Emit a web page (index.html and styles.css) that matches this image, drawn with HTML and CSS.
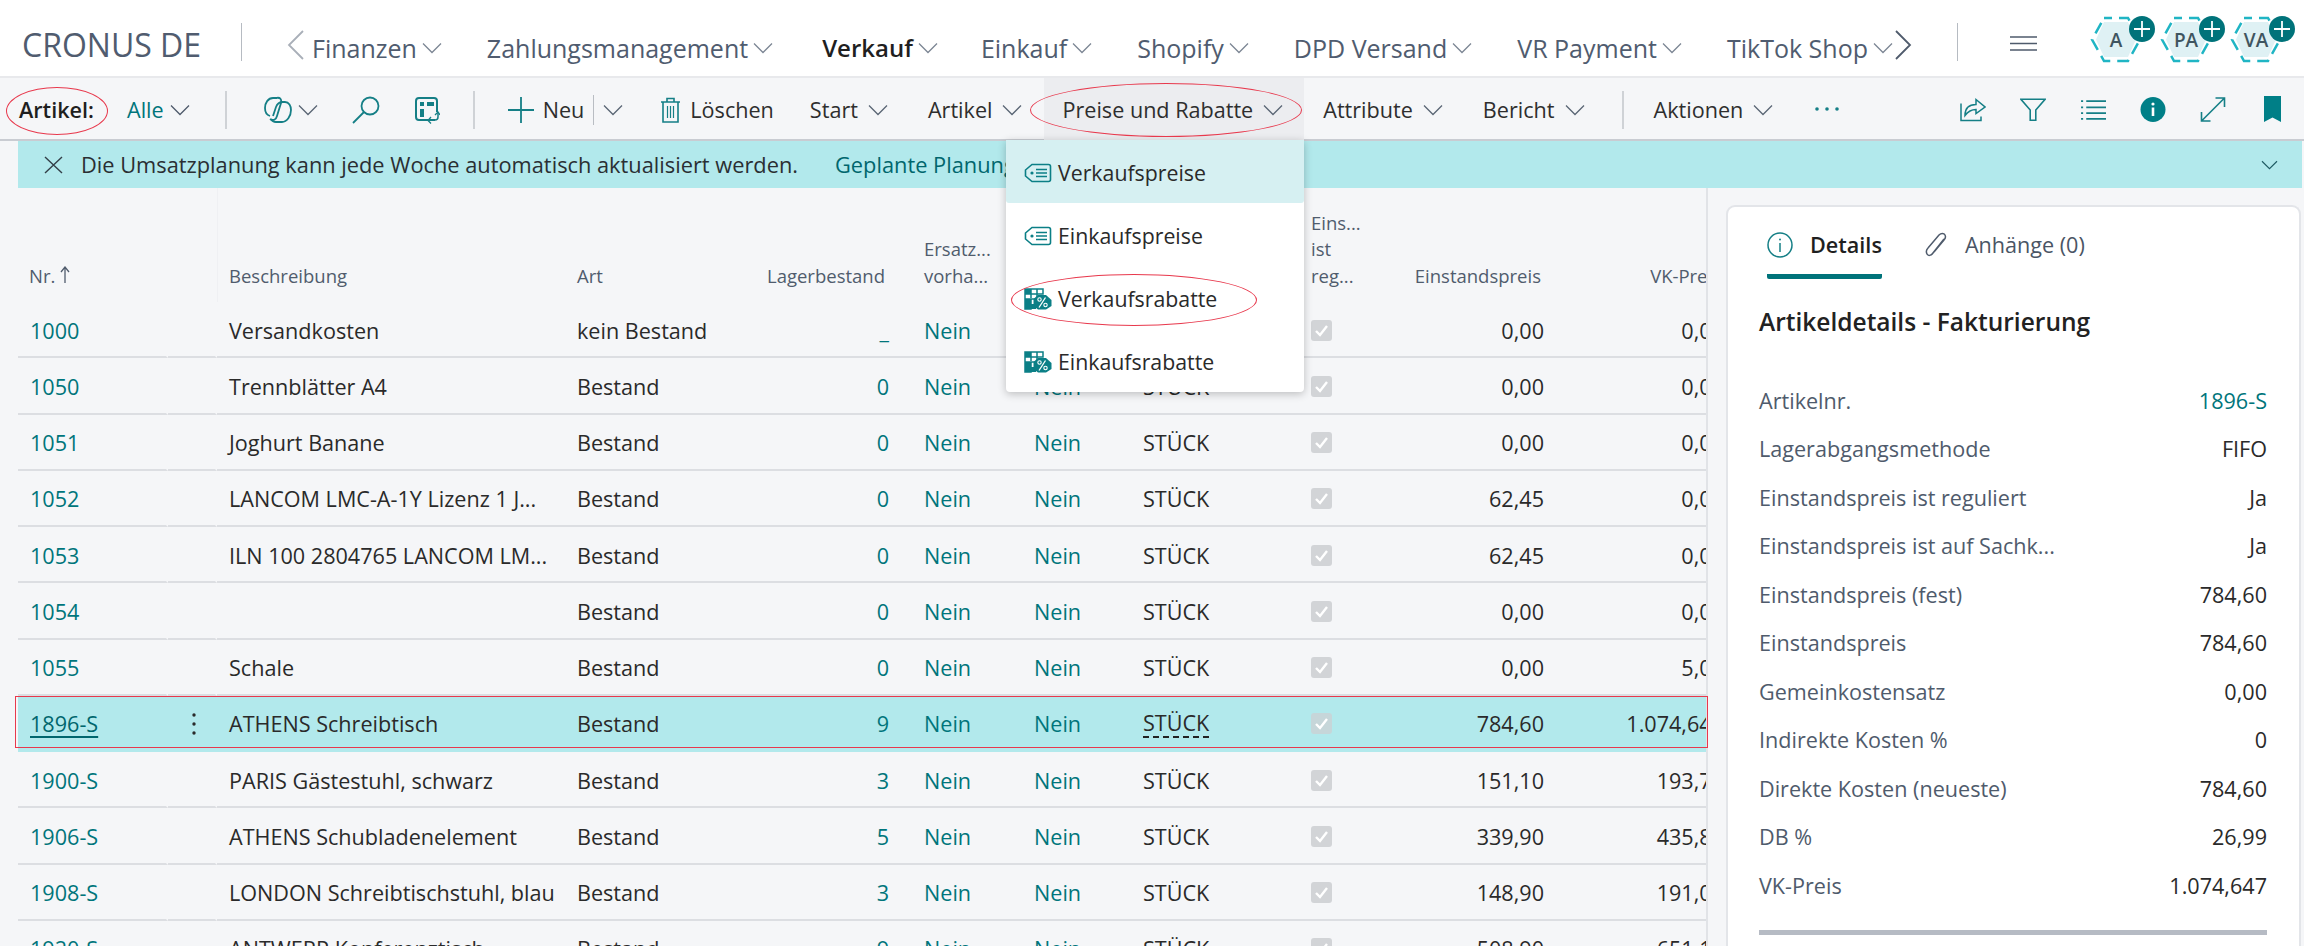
FILE: index.html
```html
<!DOCTYPE html>
<html lang="de">
<head>
<meta charset="utf-8">
<title>Artikel</title>
<link rel="stylesheet" href="styles.css">
</head>
<body>
<svg class="sprite" aria-hidden="true">
  <symbol id="chev" viewBox="0 0 20 12"><path d="M1 1.5 10 10.5 19 1.5" fill="none" stroke="currentColor" stroke-width="1.3"/></symbol>
  <symbol id="tag" viewBox="0 0 28 22"><path d="M8 2.500H24.500a2 2 0 0 1 2 2V17.500a2 2 0 0 1-2 2H8L1.500 14V8Z" fill="none" stroke="currentColor" stroke-width="1.600"/><circle cx="8" cy="11" r="1.600" fill="currentColor"/><path d="M12 7.500H23M12 11H23M12 14.500H23" stroke="currentColor" stroke-width="1.400"/></symbol>
  <symbol id="disc" viewBox="0 0 28 22"><path d="M1 1H19V6H13V11H7V21H1ZM7 6V10M1 6H13M13 1V6M7 1V6M1 11H7M1 16H7" fill="none" stroke="currentColor" stroke-width="1.500"/><path d="M1 1H7V6H1ZM1 11H7V16H1ZM7 16H12V21H1V16Z" fill="currentColor"/><path d="M14 7H22L27.500 12V18L22 21.500H14L9.500 18V11Z" fill="currentColor"/><path d="M21.500 9.500 15 19.500" stroke="#fff" stroke-width="1.300"/><circle cx="15.500" cy="11.500" r="1.700" fill="none" stroke="#fff" stroke-width="1.100"/><circle cx="21.500" cy="17" r="1.700" fill="none" stroke="#fff" stroke-width="1.100"/></symbol>
  <symbol id="hex" viewBox="0 0 52 47"><path d="M14 6H38L46 23.500 38 41H14L6 23.500Z" fill="#dff1f4"/><path d="M14 2H38L50 23.500 38 45H14L2 23.500Z" fill="none" stroke="#20b5c4" stroke-width="2.500" stroke-dasharray="12 7" stroke-dashoffset="4"/></symbol>
  <symbol id="check" viewBox="0 0 21 21"><path d="M5 11 9 15 16 6" fill="none" stroke="#fff" stroke-width="2.400"/></symbol>
</svg>

<div class="page">
  <header class="nav">
    <div class="brand">CRONUS DE</div>
    <span class="nav-sep"></span>
    <svg class="nav-arrow nav-arrow-left" viewBox="0 0 17 30"><path d="M16 1 2 15 16 29" fill="none" stroke="#a9afb8" stroke-width="1.800"/></svg>
    <nav class="nav-items">
      <a class="nav-item">Finanzen<svg class="chev nav-chev"><use href="#chev"/></svg></a>
      <a class="nav-item">Zahlungsmanagement<svg class="chev nav-chev"><use href="#chev"/></svg></a>
      <a class="nav-item nav-item-active">Verkauf<svg class="chev nav-chev"><use href="#chev"/></svg></a>
      <a class="nav-item">Einkauf<svg class="chev nav-chev"><use href="#chev"/></svg></a>
      <a class="nav-item">Shopify<svg class="chev nav-chev"><use href="#chev"/></svg></a>
      <a class="nav-item">DPD Versand<svg class="chev nav-chev"><use href="#chev"/></svg></a>
      <a class="nav-item">VR Payment<svg class="chev nav-chev"><use href="#chev"/></svg></a>
      <a class="nav-item">TikTok Shop<svg class="chev nav-chev"><use href="#chev"/></svg></a>
    </nav>
    <svg class="nav-arrow nav-arrow-right" viewBox="0 0 17 30"><path d="M1 1 15 15 1 29" fill="none" stroke="#4f5b6c" stroke-width="1.800"/></svg>
    <span class="nav-sep nav-sep-right"></span>
    <svg class="burger" viewBox="0 0 27 15"><path d="M0 1H27M0 7.500H27M0 14H27" stroke="#4f5b6c" stroke-width="1.600"/></svg>
    <div class="badges">
      <div class="badge"><svg class="hex"><use href="#hex"/></svg><span class="badge-text">A</span><svg class="badge-plus" viewBox="0 0 26 26"><circle cx="13" cy="13" r="13" fill="#00737a"/><path d="M13 5V21M5 13H21" stroke="#fff" stroke-width="1.800"/></svg></div>
      <div class="badge"><svg class="hex"><use href="#hex"/></svg><span class="badge-text">PA</span><svg class="badge-plus" viewBox="0 0 26 26"><circle cx="13" cy="13" r="13" fill="#00737a"/><path d="M13 5V21M5 13H21" stroke="#fff" stroke-width="1.800"/></svg></div>
      <div class="badge"><svg class="hex"><use href="#hex"/></svg><span class="badge-text">VA</span><svg class="badge-plus" viewBox="0 0 26 26"><circle cx="13" cy="13" r="13" fill="#00737a"/><path d="M13 5V21M5 13H21" stroke="#fff" stroke-width="1.800"/></svg></div>
    </div>
  </header>

  <div class="toolbar">
    <strong class="page-title">Artikel:</strong>
    <a class="tool tool-filter">Alle<svg class="chev"><use href="#chev"/></svg></a>
    <span class="tb-sep tb-sep-a"></span>
    <svg class="ico ico-copilot" viewBox="0 0 28 28" fill="none" stroke="#157f86" stroke-width="1.800"><path d="M13 2H9C4 2 1 7 1 12 1 16 3 19 6 20"/><path d="M12 2C16 1 18 3 17 7L13 20C12 24 9 25 6 23"/><path d="M17 6H21C25 6 27 10 27 14 27 20 23 26 18 26H12C9 26 8 25 7 23"/><path d="M19 6C15 6 13 8 12 11L9 20"/></svg>
    <svg class="chev chev-copilot"><use href="#chev"/></svg>
    <svg class="ico ico-search" viewBox="0 0 28 28" fill="none" stroke="#157f86" stroke-width="1.800"><circle cx="18" cy="10" r="8.500"/><path d="M12 16 1 27"/></svg>
    <svg class="ico ico-layout" viewBox="0 0 26 28" fill="none" stroke="#157f86" stroke-width="2"><path d="M21 24H5a3 3 0 0 1-3-3V5a3 3 0 0 1 3-3H20a3 3 0 0 1 3 3V16"/><path d="M6 6H10V10H6ZM13 6H20V10H13ZM6 13H10V21H6Z" fill="#157f86" stroke="none"/><path d="M24 17V21a3 3 0 0 1-3 3H15" stroke-width="1.500"/><path d="M17 21 14 24.500 17 27.500M21 19 24 16 26 19" stroke-width="1.300"/></svg>
    <span class="tb-sep tb-sep-b"></span>
    <svg class="ico ico-plus" viewBox="0 0 26 26"><path d="M13 0V26M0 13H26" stroke="#157f86" stroke-width="1.800"/></svg>
    <a class="tool tool-new">Neu</a>
    <span class="tb-sep-thin"></span>
    <svg class="chev chev-new"><use href="#chev"/></svg>
    <svg class="ico ico-trash" viewBox="0 0 21 26" fill="none" stroke="#157f86" stroke-width="1.600"><path d="M1 5H20M7 5V1.500H14V5M3 5V25H18V5"/><path d="M7.500 9V21M10.500 9V21M13.500 9V21" stroke-width="1.200"/></svg>
    <a class="tool tool-delete">Löschen</a>
    <a class="tool tool-menu tool-start">Start<svg class="chev"><use href="#chev"/></svg></a>
    <a class="tool tool-menu">Artikel<svg class="chev"><use href="#chev"/></svg></a>
    <a class="tool tool-menu tool-open">Preise und Rabatte<svg class="chev"><use href="#chev"/></svg></a>
    <a class="tool tool-menu">Attribute<svg class="chev"><use href="#chev"/></svg></a>
    <a class="tool tool-menu">Bericht<svg class="chev"><use href="#chev"/></svg></a>
    <span class="tb-sep tb-sep-c"></span>
    <a class="tool tool-actions">Aktionen<svg class="chev"><use href="#chev"/></svg></a>
    <svg class="ico ico-more" viewBox="0 0 26 6"><circle cx="3" cy="3" r="1.800" fill="#157f86"/><circle cx="13" cy="3" r="1.800" fill="#157f86"/><circle cx="23" cy="3" r="1.800" fill="#157f86"/></svg>
    <div class="tb-right">
      <svg class="ico-r" viewBox="0 0 26 24" fill="none" stroke="#157f86" stroke-width="1.500"><path d="M1 6V23H21V19"/><path d="M5 18C5 11 9 7 16 7V2L25 9.500 16 16V12C11 12 8 14 5 18Z"/></svg>
      <svg class="ico-r" viewBox="0 0 28 25" fill="none" stroke="#157f86" stroke-width="1.700"><path d="M1 1.500H27L17 13V24H11V13Z"/></svg>
      <svg class="ico-r" viewBox="0 0 25 24"><path d="M1 4H3M6 4H25M1 10H3M6 10H25M1 15.500H3M6 15.500H25M1 21H3M6 21H25" stroke="#157f86" stroke-width="1.700"/></svg>
      <svg class="ico-r" viewBox="0 0 25 25"><circle cx="12.500" cy="12.500" r="12.500" fill="#007f87"/><circle cx="12.500" cy="7" r="1.600" fill="#fff"/><path d="M12.500 10.500V19" stroke="#fff" stroke-width="2.600"/></svg>
      <svg class="ico-r" viewBox="0 0 25 25" fill="none" stroke="#157f86" stroke-width="1.600"><path d="M1 24 24 1M15 1H24V10M1 15V24H10"/></svg>
      <svg class="ico-r ico-mark" viewBox="0 0 17 26"><path d="M0 0H17V26L8.500 21.500 0 26Z" fill="#007f87"/></svg>
    </div>
  </div>

  <div class="msg">
    <svg class="msg-close" viewBox="0 0 19 18"><path d="M1 1 18 17M18 1 1 17" stroke="#333f48" stroke-width="1.400"/></svg>
    <span class="msg-text">Die Umsatzplanung kann jede Woche automatisch aktualisiert werden.</span>
    <a class="msg-link">Geplante Planungsaktualisierungen anzeigen</a>
    <svg class="chev msg-chev"><use href="#chev"/></svg>
  </div>

  <main class="content">
    <section class="table">
      <div class="grid thead">
        <div class="th">Nr. <svg class="sort" viewBox="0 0 10 17"><path d="M5 17V2M1 6 5 1 9 6" fill="none" stroke="#505c6d" stroke-width="1.300"/></svg></div>
        <div class="th"></div>
        <div class="th">Beschreibung</div>
        <div class="th">Art</div>
        <div class="th th-r th-lager">Lagerbestand</div>
        <div class="th">Ersatz...<br>vorha...</div>
        <div class="th">Stückl...<br>vorha...</div>
        <div class="th">Basis...</div>
        <div class="th">Eins...<br>ist<br>reg...</div>
        <div class="th th-r">Einstandspreis</div>
        <div class="th th-r">VK-Preis</div>
      </div>

      <div class="grid row"><div class="td"><a class="link">1000</a></div><div class="td"></div><div class="td">Versandkosten</div><div class="td">kein Bestand</div><div class="td td-r td-lager"><a class="link">_</a></div><div class="td"><a class="link">Nein</a></div><div class="td"><a class="link">Nein</a></div><div class="td">STÜCK</div><div class="td"><svg class="cb"><use href="#check"/></svg></div><div class="td td-r">0,00</div><div class="td td-r">0,00</div></div>
      <div class="grid row"><div class="td"><a class="link">1050</a></div><div class="td"></div><div class="td">Trennblätter A4</div><div class="td">Bestand</div><div class="td td-r td-lager"><a class="link">0</a></div><div class="td"><a class="link">Nein</a></div><div class="td"><a class="link">Nein</a></div><div class="td">STÜCK</div><div class="td"><svg class="cb"><use href="#check"/></svg></div><div class="td td-r">0,00</div><div class="td td-r">0,00</div></div>
      <div class="grid row"><div class="td"><a class="link">1051</a></div><div class="td"></div><div class="td">Joghurt Banane</div><div class="td">Bestand</div><div class="td td-r td-lager"><a class="link">0</a></div><div class="td"><a class="link">Nein</a></div><div class="td"><a class="link">Nein</a></div><div class="td">STÜCK</div><div class="td"><svg class="cb"><use href="#check"/></svg></div><div class="td td-r">0,00</div><div class="td td-r">0,00</div></div>
      <div class="grid row"><div class="td"><a class="link">1052</a></div><div class="td"></div><div class="td">LANCOM LMC-A-1Y Lizenz 1 J...</div><div class="td">Bestand</div><div class="td td-r td-lager"><a class="link">0</a></div><div class="td"><a class="link">Nein</a></div><div class="td"><a class="link">Nein</a></div><div class="td">STÜCK</div><div class="td"><svg class="cb"><use href="#check"/></svg></div><div class="td td-r">62,45</div><div class="td td-r">0,00</div></div>
      <div class="grid row"><div class="td"><a class="link">1053</a></div><div class="td"></div><div class="td">ILN 100 2804765 LANCOM LM...</div><div class="td">Bestand</div><div class="td td-r td-lager"><a class="link">0</a></div><div class="td"><a class="link">Nein</a></div><div class="td"><a class="link">Nein</a></div><div class="td">STÜCK</div><div class="td"><svg class="cb"><use href="#check"/></svg></div><div class="td td-r">62,45</div><div class="td td-r">0,00</div></div>
      <div class="grid row"><div class="td"><a class="link">1054</a></div><div class="td"></div><div class="td"></div><div class="td">Bestand</div><div class="td td-r td-lager"><a class="link">0</a></div><div class="td"><a class="link">Nein</a></div><div class="td"><a class="link">Nein</a></div><div class="td">STÜCK</div><div class="td"><svg class="cb"><use href="#check"/></svg></div><div class="td td-r">0,00</div><div class="td td-r">0,00</div></div>
      <div class="grid row"><div class="td"><a class="link">1055</a></div><div class="td"></div><div class="td">Schale</div><div class="td">Bestand</div><div class="td td-r td-lager"><a class="link">0</a></div><div class="td"><a class="link">Nein</a></div><div class="td"><a class="link">Nein</a></div><div class="td">STÜCK</div><div class="td"><svg class="cb"><use href="#check"/></svg></div><div class="td td-r">0,00</div><div class="td td-r">5,00</div></div>
      <div class="grid row row-selected"><div class="td"><a class="link link-current">1896-S</a></div><div class="td td-kebab"><svg class="kebab" viewBox="0 0 4 24"><circle cx="2" cy="3" r="1.700"/><circle cx="2" cy="12" r="1.700"/><circle cx="2" cy="21" r="1.700"/></svg></div><div class="td">ATHENS Schreibtisch</div><div class="td">Bestand</div><div class="td td-r td-lager"><a class="link">9</a></div><div class="td"><a class="link">Nein</a></div><div class="td"><a class="link">Nein</a></div><div class="td"><span class="dashed">STÜCK</span></div><div class="td"><svg class="cb"><use href="#check"/></svg></div><div class="td td-r">784,60</div><div class="td td-r">1.074,647</div></div>
      <div class="grid row"><div class="td"><a class="link">1900-S</a></div><div class="td"></div><div class="td">PARIS Gästestuhl, schwarz</div><div class="td">Bestand</div><div class="td td-r td-lager"><a class="link">3</a></div><div class="td"><a class="link">Nein</a></div><div class="td"><a class="link">Nein</a></div><div class="td">STÜCK</div><div class="td"><svg class="cb"><use href="#check"/></svg></div><div class="td td-r">151,10</div><div class="td td-r">193,70</div></div>
      <div class="grid row"><div class="td"><a class="link">1906-S</a></div><div class="td"></div><div class="td">ATHENS Schubladenelement</div><div class="td">Bestand</div><div class="td td-r td-lager"><a class="link">5</a></div><div class="td"><a class="link">Nein</a></div><div class="td"><a class="link">Nein</a></div><div class="td">STÜCK</div><div class="td"><svg class="cb"><use href="#check"/></svg></div><div class="td td-r">339,90</div><div class="td td-r">435,80</div></div>
      <div class="grid row"><div class="td"><a class="link">1908-S</a></div><div class="td"></div><div class="td">LONDON Schreibtischstuhl, blau</div><div class="td">Bestand</div><div class="td td-r td-lager"><a class="link">3</a></div><div class="td"><a class="link">Nein</a></div><div class="td"><a class="link">Nein</a></div><div class="td">STÜCK</div><div class="td"><svg class="cb"><use href="#check"/></svg></div><div class="td td-r">148,90</div><div class="td td-r">191,00</div></div>
      <div class="grid row"><div class="td"><a class="link">1920-S</a></div><div class="td"></div><div class="td">ANTWERP Konferenztisch</div><div class="td">Bestand</div><div class="td td-r td-lager"><a class="link">9</a></div><div class="td"><a class="link">Nein</a></div><div class="td"><a class="link">Nein</a></div><div class="td">STÜCK</div><div class="td"><svg class="cb"><use href="#check"/></svg></div><div class="td td-r">508,90</div><div class="td td-r">651,10</div></div>
    </section>

    <aside class="panel">
      <div class="tabs">
        <div class="tab tab-active">
          <svg class="tab-ico" viewBox="0 0 26 26" fill="none" stroke="#157f86" stroke-width="1.500"><circle cx="13" cy="13" r="12"/><path d="M13 11V20"/><circle cx="13" cy="7.500" r="1" fill="#157f86" stroke="none"/></svg>
          <span>Details</span>
        </div>
        <div class="tab">
          <svg class="tab-ico tab-clip" viewBox="0 0 22 26" fill="none" stroke="#4f5b6c" stroke-width="1.500"><path d="M19 7 8 21C6 24 3 24 2 22 1 20 1 18 3 16L14 3C16 1 19 1 20 3 21 5 21 6 19 8L9 20"/></svg>
          <span>Anhänge (0)</span>
        </div>
      </div>
      <h2 class="panel-title">Artikeldetails - Fakturierung</h2>
      <dl class="facts">
        <div class="fact"><dt>Artikelnr.</dt><dd class="fact-link">1896-S</dd></div>
        <div class="fact"><dt>Lagerabgangsmethode</dt><dd>FIFO</dd></div>
        <div class="fact"><dt>Einstandspreis ist reguliert</dt><dd>Ja</dd></div>
        <div class="fact"><dt>Einstandspreis ist auf Sachk...</dt><dd>Ja</dd></div>
        <div class="fact"><dt>Einstandspreis (fest)</dt><dd>784,60</dd></div>
        <div class="fact"><dt>Einstandspreis</dt><dd>784,60</dd></div>
        <div class="fact"><dt>Gemeinkostensatz</dt><dd>0,00</dd></div>
        <div class="fact"><dt>Indirekte Kosten %</dt><dd>0</dd></div>
        <div class="fact"><dt>Direkte Kosten (neueste)</dt><dd>784,60</dd></div>
        <div class="fact"><dt>DB %</dt><dd>26,99</dd></div>
        <div class="fact"><dt>VK-Preis</dt><dd>1.074,647</dd></div>
      </dl>
      <div class="panel-rule"></div>
    </aside>
  </main>

  <div class="menu">
    <a class="menu-item menu-item-hover"><svg class="menu-ico"><use href="#tag"/></svg>Verkaufspreise</a>
    <a class="menu-item"><svg class="menu-ico"><use href="#tag"/></svg>Einkaufspreise</a>
    <a class="menu-item"><svg class="menu-ico"><use href="#disc"/></svg>Verkaufsrabatte</a>
    <a class="menu-item"><svg class="menu-ico"><use href="#disc"/></svg>Einkaufsrabatte</a>
  </div>

  <span class="mark mark-title"></span>
  <span class="mark mark-prices"></span>
  <span class="mark mark-sales"></span>
  <span class="mark-row"></span>
</div>
</body>
</html>
```

FILE: styles.css
```css
* { box-sizing: border-box; }
html, body { margin: 0; height: 100%; }
body {
  background: #f5f6f8;
  color: #2a2a2a;
  font-family: "Open Sans", "Liberation Sans", sans-serif;
  font-size: 21.600px;
  overflow: hidden;
}
a { color: inherit; text-decoration: none; }
.sprite { position: absolute; width: 0; height: 0; }
.page { position: relative; width: 2304px; height: 946px; overflow: hidden; }
.chev { width: 20px; height: 12px; color: #5a6675; flex: none; }

/* top navigation */
.nav {
  display: flex;
  align-items: center;
  height: 78px;
  padding-left: 22px;
  background: #fff;
  border-bottom: 2px solid #e8e9ec;
  color: #505c6f;
}
.brand { font-size: 32px; width: 219px; margin-top: 12px; }
.nav-sep { width: 1px; height: 38px; background: #b6bbc2; margin-top: 8px; }
.nav-arrow { width: 17px; height: 30px; margin-top: 14px; flex: none; }
.nav-arrow-left { margin-left: 45px; }
.nav-arrow-right { margin-left: 2px; }
.nav-items { display: flex; margin-left: 8px; margin-top: 20px; gap: 45px; }
.nav-item { display: flex; align-items: center; gap: 5px; font-size: 25px; line-height: 32px; white-space: nowrap; }
.nav-item-active { color: #1f1f1f; font-size: 24px; font-weight: 600; margin-left: 4px; margin-right: -2px; }
.nav-chev { color: #7c8694; }
.nav-sep-right { margin-left: 45px; }
.burger { width: 27px; height: 15px; margin-left: 52px; margin-top: 11px; flex: none; }
.badges { display: flex; margin-left: 53px; gap: 18px; margin-top: 3px; }
.badge { position: relative; width: 52px; height: 47px; }
.hex { width: 52px; height: 47px; display: block; }
.badge-text {
  position: absolute; inset: 0;
  display: flex; align-items: center; justify-content: center;
  font-size: 19px; font-weight: 600; color: #3f5560;
}
.badge-plus { position: absolute; right: -13px; top: 0; width: 26px; height: 26px; }

/* action bar */
.toolbar {
  position: relative;
  display: flex;
  align-items: center;
  height: 63px;
  padding: 2px 0 0 19px;
  border-bottom: 2px solid #c9ccd2;
}
.page-title { font-weight: 600; color: #1f1f1f; width: 75px; }
.tool { display: flex; align-items: center; gap: 10px; white-space: nowrap; color: #2e2e2e; flex: none; }
.tool-filter { color: #00757b; margin-left: 33px; gap: 6px; }
.tool-filter .chev { color: #4f5b6c; }
.tb-sep { width: 2px; height: 38px; background: #cfd2d6; flex: none; }
.tb-sep-a { margin-left: 35px; }
.tb-sep-b { margin-left: 33px; }
.tb-sep-c { margin-left: 37px; }
.ico { flex: none; display: block; }
.ico-copilot { width: 28px; height: 28px; margin-left: 37px; }
.chev-copilot { margin-left: 6px; }
.ico-search { width: 28px; height: 28px; margin-left: 34px; }
.ico-layout { width: 26px; height: 28px; margin-left: 34px; }
.ico-plus { width: 26px; height: 26px; margin-left: 33px; }
.tool-new { margin-left: 9px; }
.tb-sep-thin { width: 1px; height: 30px; background: #b9bdc3; margin-left: 9px; flex: none; }
.chev-new { margin-left: 9px; }
.ico-trash { width: 21px; height: 26px; margin-left: 37px; }
.tool-delete { margin-left: 9px; }
.tool-menu { margin-left: 40px; }
.tool-start { margin-left: 36px; }
.tool-open {
  position: relative;
  z-index: 0;
}
.tool-open::before {
  content: "";
  position: absolute;
  z-index: -1;
  left: -18px; right: -21px;
  top: -17px; bottom: -16px;
  background: #ecedf0;
}
.tool-actions { margin-left: 30px; }
.ico-more { width: 26px; height: 6px; margin-left: 41px; margin-top: -2px; }
.tb-right { display: flex; align-items: center; gap: 34px; margin-left: auto; padding-right: 23px; }
.ico-r { width: 26px; height: 25px; display: block; margin-top: -1px; }
.ico-mark { width: 17px; height: 26px; margin-left: 4px; }

/* message bar */
.msg {
  display: flex;
  align-items: center;
  height: 47px;
  margin: 0 2px 0 18px;
  padding-left: 26px;
  background: #b2e9ec;
  font-size: 21.800px;
}
.msg-close { width: 19px; height: 18px; flex: none; }
.msg-text { margin-left: 18px; color: #2a2f33; }
.msg-link { margin-left: 37px; color: #00666d; }
.msg-chev { margin-left: auto; margin-right: 24px; width: 17px; height: 10px; color: #1e5a63; }

/* list */
.content { display: flex; align-items: flex-start; }
.table {
  width: 1690px;
  height: 758px;
  margin-left: 18px;
  overflow: hidden;
  border-right: 2px solid #e1e3e7;
}
.grid {
  display: grid;
  width: 1716px;
  grid-template-columns: 150px 49px 348px 135px 212px 110px 109px 168px 131px 124px 180px;
}
.thead { height: 114px; color: #505c6d; font-size: 18.500px; line-height: 26.500px; }
.th { display: flex; flex-direction: column; justify-content: flex-end; padding: 0 0 13px 12px; white-space: nowrap; }
.th:first-child { display: block; align-self: end; padding-left: 11px; border-right: 2px solid transparent; }
.th:nth-child(2) { box-shadow: 1px 0 0 #eff0f3; }
.th-r { align-items: flex-end; text-align: right; padding-left: 0; padding-right: 13px; }
.th-lager { padding-right: 27px; }
.sort { width: 10px; height: 17px; }
.row { height: 56.250px; }
.td {
  display: flex;
  align-items: center;
  padding: 2px 0 0 12px;
  border-bottom: 2px solid #dcdee2;
  white-space: nowrap;
  overflow: visible;
}
.td:first-child { padding-left: 12px; border-right: 2px solid #f5f6f8; }
.td:nth-child(2) { border-right: 2px solid #f5f6f8; }
.td-r { justify-content: flex-end; padding-left: 0; padding-right: 10px; }
.td-lager { padding-right: 23px; }
.td-kebab { justify-content: center; padding-left: 4px; }
.link { color: #00757b; }
.link-current { text-decoration: underline; color: #00666d; text-underline-offset: 4px; }
.kebab { width: 4px; height: 24px; fill: #2a2a2a; }
.cb { width: 21px; height: 21px; background: #d2d4d7; border-radius: 3px; }
.row-selected { background: #b2e9ec; }
.row-selected .td { border-bottom-color: #b2e9ec; }
.row-selected .td:first-child, .row-selected .td:nth-child(2) { border-right-color: #b2e9ec; }
.row-selected .cb { background: #c6d6d9; }
.dashed { border-bottom: 2px dashed #222; line-height: 26px; }

/* fact box */
.panel {
  width: 575px;
  height: 760px;
  margin: 17px 0 0 18px;
  padding: 0 32px 0 31px;
  background: #fff;
  border: 2px solid #e3e5e9;
  border-bottom: 0;
  border-radius: 9px 9px 0 0;
}
.tabs { display: flex; height: 72px; padding: 20px 0 0 8px; gap: 43px; }
.tab { display: flex; align-items: flex-start; gap: 18px; color: #4a5565; line-height: 36px; height: 52px; }
.tab-active { color: #1f1f1f; font-weight: 600; border-bottom: 5px solid #00737a; border-radius: 2px; gap: 17px; }
.tab-ico { width: 26px; height: 26px; margin-top: 5px; flex: none; }
.tab-clip { width: 22px; }
.panel-title { margin: 26px 0 0; font-size: 24.500px; font-weight: 600; line-height: 34px; color: #222; }
.facts { margin: 37px 0 0; }
.fact { display: flex; justify-content: space-between; align-items: center; height: 48.500px; }
.fact dt { color: #4f5b6c; }
.fact dd { margin: 0; color: #2a2a2a; }
.fact dd.fact-link { color: #00757b; }
.panel-rule { height: 5px; margin-top: 20px; background: #b6bbc4; }

/* open dropdown */
.menu {
  position: absolute;
  left: 1006px; top: 140px;
  width: 298px; height: 252px;
  background: #fff;
  border-radius: 0 0 4px 4px;
  box-shadow: 0 2px 8px rgba(0, 0, 0, .24);
  font-size: 21.300px;
}
.menu-item {
  display: flex;
  align-items: center;
  height: 63px;
  padding: 2px 0 0 18px;
  gap: 6px;
  color: #2a2a2a;
}
.menu-item-hover { background: #d6f0f2; border-radius: 0 0 3px 3px; }
.menu-ico { width: 28px; height: 22px; color: #0b7f86; flex: none; }

/* red annotations drawn over the screenshot */
.mark, .mark-row { position: absolute; pointer-events: none; }
.mark { border: 1.500px solid #e8394d; border-radius: 50%; }
.mark-title { left: 6px; top: 87px; width: 102px; height: 48px; }
.mark-prices { left: 1030px; top: 83px; width: 272px; height: 54px; }
.mark-sales { left: 1011px; top: 274px; width: 246px; height: 52px; }
.mark-row { left: 15px; top: 696px; width: 1693px; height: 52px; border: 1.500px solid #e8394d; }
```
